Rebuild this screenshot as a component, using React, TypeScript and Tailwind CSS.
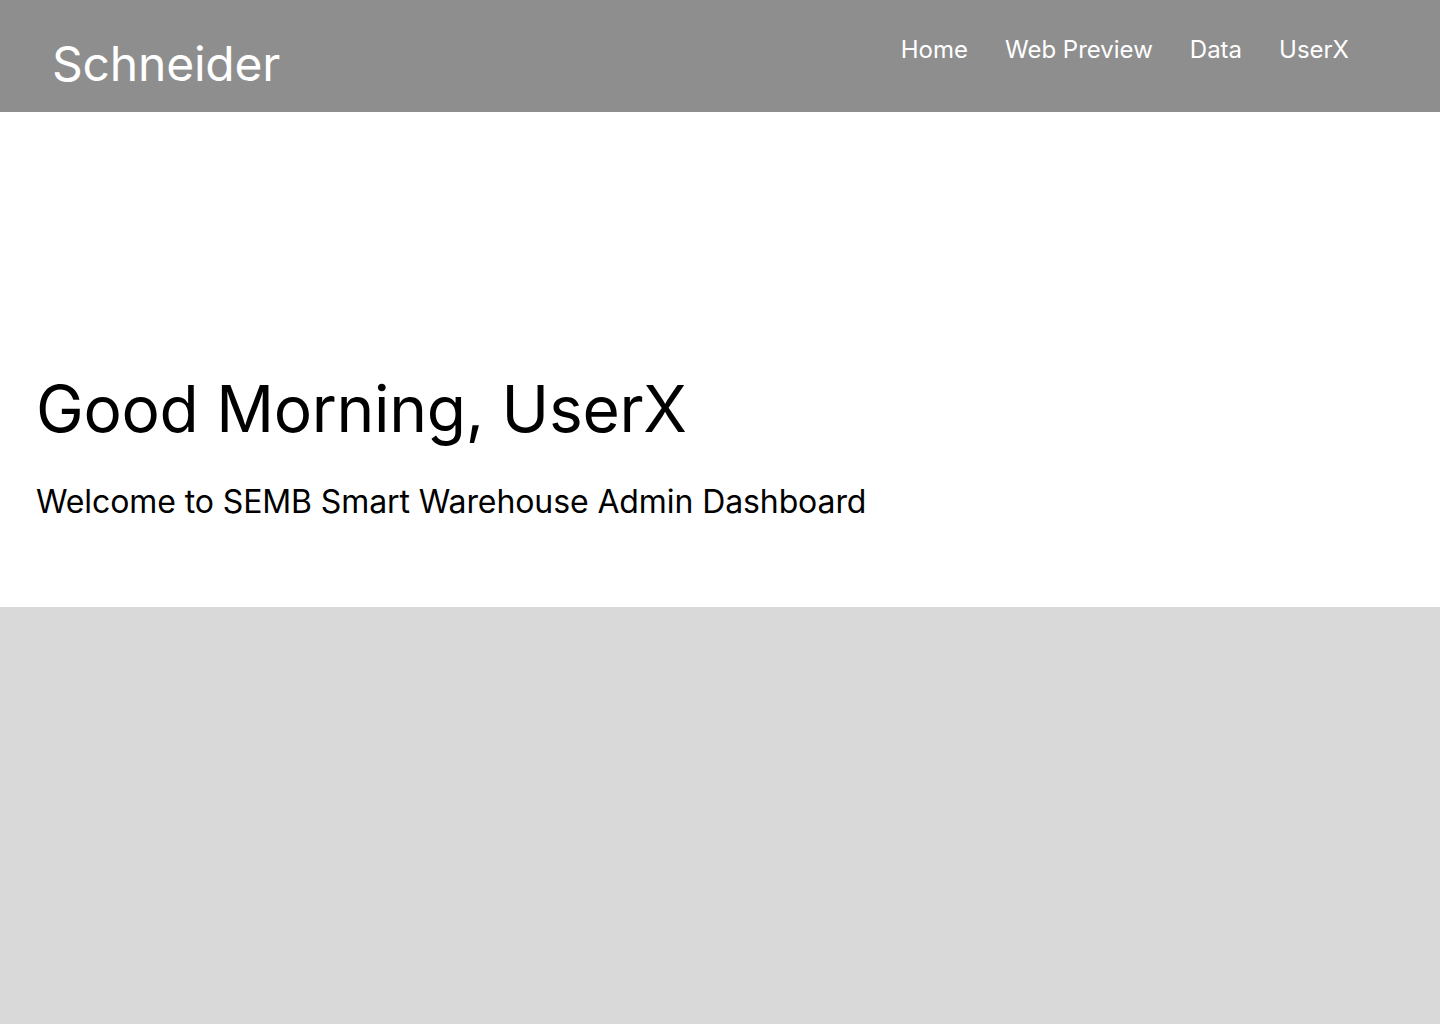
import React from 'react'

const navItems = ['Home', 'Web Preview', 'Data', 'UserX']

const Header = () => {
    return (
        <header className="flex h-[112px] items-center justify-between bg-[#8e8e8e] pl-[52px] pr-[91px] text-white">
            <div className="mt-[16px] text-[48px] leading-none tracking-[-0.2px]">Schneider</div>
            <nav className="-mt-[12px] flex items-center gap-[37px]">
                {navItems.map((item) => (
                    <a key={item} href="#" className="text-[24px] leading-none">
                        {item}
                    </a>
                ))}
            </nav>
        </header>
    )
}

export default function App() {
    return (
        <div className="flex min-h-screen flex-col font-['Inter',sans-serif]">
            <Header />
            <section className="flex h-[495px] flex-col bg-white px-[36px] pt-[265px] text-black">
                <h1 className="text-[64px] leading-none tracking-[-0.3px]">Good Morning, UserX</h1>
                <p className="mt-[45px] text-[32px] leading-none tracking-[-0.1px]">Welcome to SEMB Smart Warehouse Admin Dashboard</p>
            </section>
            <section className="flex-1 bg-[#d9d9d9]"></section>
        </div>
    )
}
